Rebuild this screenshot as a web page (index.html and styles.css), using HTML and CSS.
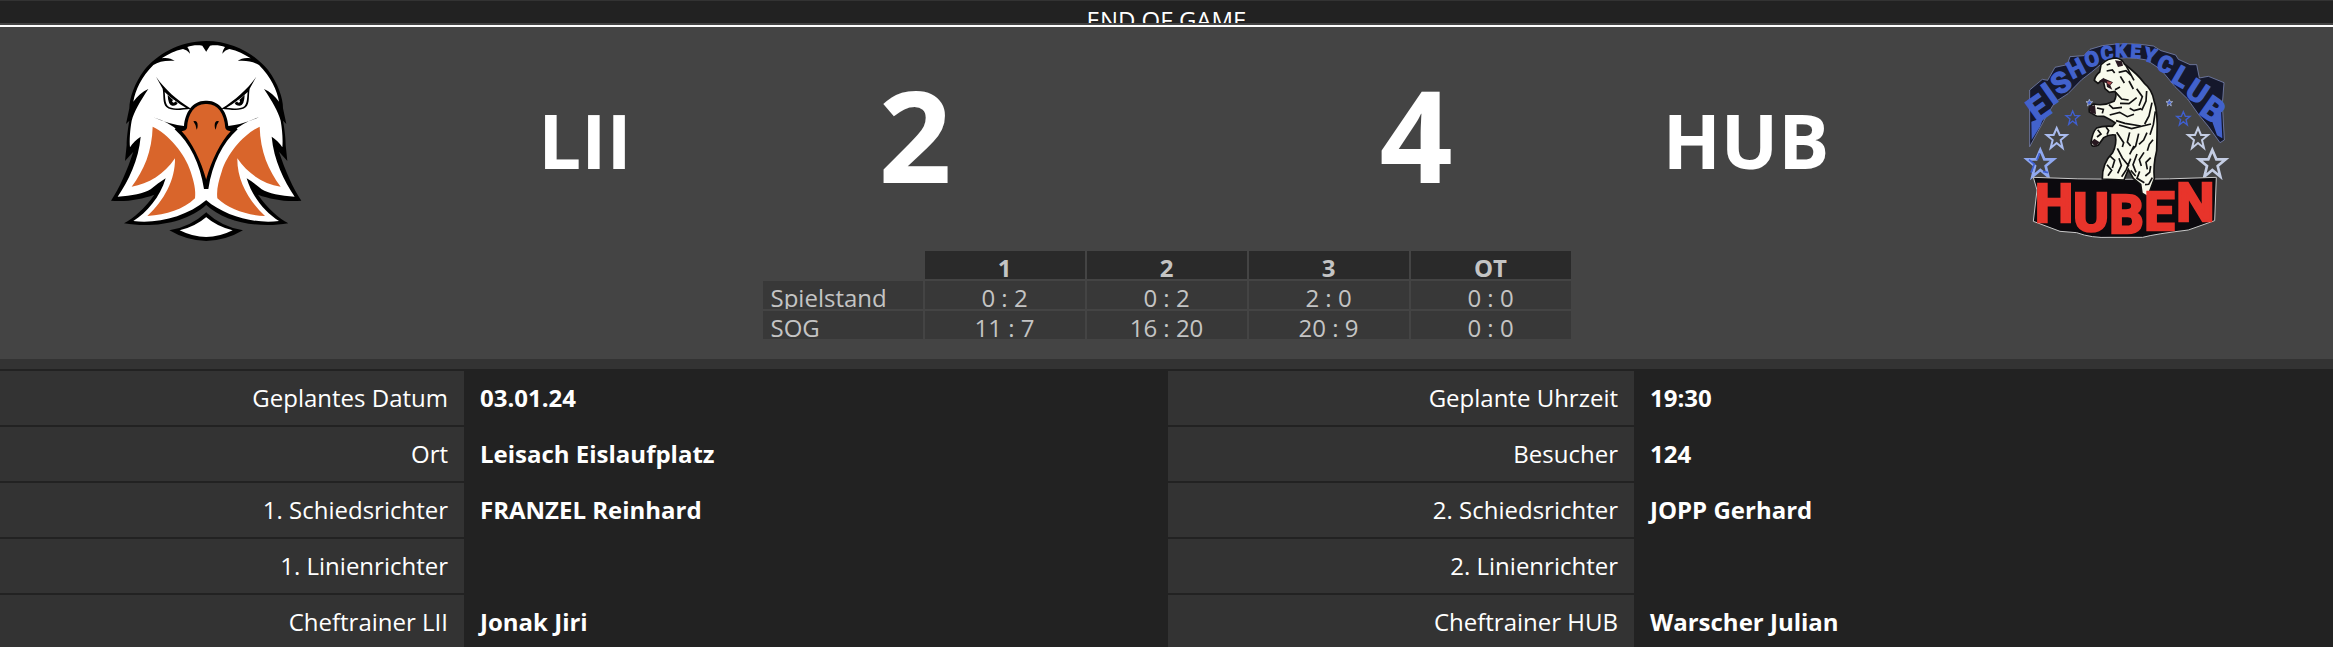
FILE: index.html
```
<!DOCTYPE html>
<html lang="de">
<head>
    <meta charset="UTF-8">
    <meta name="viewport" content="width=device-width, initial-scale=1.0">
    <title>LII - HUB</title>
    <link rel="stylesheet" href="styles.css">
</head>
<body>
    <header class="status-bar">END OF GAME</header>

    <section class="scoreboard">
        <div class="teams">
            <svg class="logo" viewBox="18 33 600 600" role="img" aria-label="LII">
                <defs>
                    <g id="eagle-half">
                        <path d="M319 33C235 33 170 75 133 120C103 160 88 205 88 235L78 282L88 272C82 305 80 330 80 345L75 393L100 365C82 420 58 475 33 512C80 516 125 508 163 494C135 535 100 565 72 580C165 596 265 575 319 524Z"/>
                        <path fill="#fff" d="M319 66L307 47C292 44 275 46 262 51C266 57 269 63 270 71C264 63 257 59 249 57C225 62 203 73 185 85C202 82 214 86 224 93C195 91 175 96 160 105C125 140 105 182 100 215C112 199 127 185 145 177C120 215 103 243 95 272C90 300 88 330 90 352C98 339 109 329 122 320C116 390 85 452 53 500C95 498 132 490 152 478C166 466 181 455 197 445C180 502 140 548 100 573C172 582 260 560 319 510Z"/>
                        <path fill="#d9652b" d="M158 290C205 312 255 370 272 425C282 455 288 480 285 505C250 538 200 555 142 558C192 512 226 450 225 385C193 433 145 462 95 470C132 420 156 365 158 290Z"/>
                        <path d="M168 140C195 178 230 209 273 236C245 239 215 245 199 231C187 219 192 198 188 176Z"/>
                        <path fill="#fff" d="M194 186C216 207 238 222 258 233C235 235 214 238 204 229C195 220 196 203 194 186Z"/>
                        <path d="M203 195Q218 211 233 219Q229 228 217 227Q204 225 203 195Z"/>
                        <circle cx="221" cy="214" r="4" fill="#fff"/>
                        <path d="M160 262Q213 285 252 288L262 304L240 306Q206 276 160 262Z"/>
                        <path fill="#d9652b" d="M319 217C280 216 260 250 256 294Q248 300 230 299C275 343 302 397 315 458L319 460Z"/>
                        <path d="M319 212C278 210 255 248 252 288Q245 294 228 294L224 298C270 340 300 400 312 477H319V450C302 390 275 335 245 304Q258 302 261 294C264 248 285 220 319 222Z"/>
                        <path d="M280 274Q293 270 293 287Q293 293 290 299Q288 284 280 274Z"/>
                        <path d="M319 547Q270 592 208 601Q260 632 319 633Z"/>
                        <path fill="#fff" d="M319 561Q287 589 239 601Q278 621 319 621Z"/>
                    </g>
                </defs>
                <use href="#eagle-half"/>
                <use href="#eagle-half" transform="translate(637 0) scale(-1 1)"/>
            </svg>
            <h2 class="team-name">LII</h2>
            <strong class="score">2</strong>
            <strong class="score away">4</strong>
            <h2 class="team-name">HUB</h2>
            <svg class="logo" viewBox="33 33 600 600" role="img" aria-label="HUB">
                <defs>
                    <path id="star" d="M0-10L3-3L10-3L4 2L6 10L0 5L-6 10L-4 2L-10-3L-3-3Z"/>
                </defs>

                <!-- arch behind the club name -->
                <path class="arch" d="M44 180L82 148L98 151L120 112L157 104L165 80L207 77L225 58L262 47Q335 35 415 48L438 62L482 75L490 88L525 104L545 104L553 144L580 139L627 158L622 222L628 330L615 338L580 289L551 254L518 207L480 170L438 119L395 90Q335 76 272 91L230 126L200 149L159 191L120 216L96 255L44 350Z"/>
                <path fill="#4262cc" d="M49 275L86 262L75 290L50 330ZM590 270L618 240L622 325L606 316Z"/>
                <text class="arch-text">
                    <tspan x="67" y="280" rotate="-35" font-size="100">E</tspan>
                    <tspan x="112" y="227" rotate="-35" font-size="98">I</tspan>
                    <tspan x="131" y="197" rotate="-32" font-size="86">S</tspan>
                    <tspan x="172" y="148" rotate="-27" font-size="70">H</tspan>
                    <tspan x="217" y="114" rotate="-18" font-size="62">O</tspan>
                    <tspan x="260" y="91" rotate="-8" font-size="56">C</tspan>
                    <tspan x="301" y="81" rotate="0" font-size="54">K</tspan>
                    <tspan x="346" y="82" rotate="4" font-size="54">E</tspan>
                    <tspan x="383" y="91" rotate="14" font-size="58">Y</tspan>
                    <tspan x="421" y="115" rotate="25" font-size="68">C</tspan>
                    <tspan x="466" y="154" rotate="30" font-size="82">L</tspan>
                    <tspan x="506" y="194" rotate="33" font-size="88">U</tspan>
                    <tspan x="549" y="249" rotate="35" font-size="98">B</tspan>
                </text>

                <g class="stars">
                    <use href="#star" transform="translate(223 218)" fill="#3f5fd0"/>
                    <use href="#star" transform="translate(463 218)" fill="#3f5fd0"/>
                    <use href="#star" transform="translate(173 263) scale(2)" stroke="#3f5fd0"/>
                    <use href="#star" transform="translate(505 265) scale(2)" stroke="#3f5fd0"/>
                    <use href="#star" transform="translate(125 324) scale(3)" stroke="#a9bbee"/>
                    <use href="#star" transform="translate(549 324) scale(3)" stroke="#c4cde3"/>
                    <use href="#star" transform="translate(76 400) scale(4)" stroke="#8fa8f0"/>
                    <use href="#star" transform="translate(592 400) scale(4)" stroke="#c4cde3"/>
                    <path fill="none" stroke="#3f5fd0" stroke-width="5" d="M48 428L58 402L42 389M66 390L74 369M84 424L99 428"/>
                </g>

                <!-- banner -->
                <path fill="#0c0a0e" stroke="#c9c9c9" stroke-width="3" d="M55 442Q320 454 604 442L599 572L520 600Q420 612 383 622H285Q230 625 185 608L135 604L55 574L66 480Z"/>

                <!-- bear -->
                <path fill="#f8faec" stroke="#111" stroke-width="5" d="M264 148L249 160L238 151Q240 137 254 126L258 104Q278 84 304 84Q323 88 328 102Q370 134 388 160Q411 178 417 212Q429 245 426 315L425 362Q414 405 418 446L398 500L381 490L377 463L355 445L340 418L327 450L262 447Q261 400 293 368Q306 344 301 315Q283 312 266 323L250 345Q230 355 228 339Q232 306 245 294Q264 287 292 289L301 279Q280 265 266 259L244 258L223 246Q219 229 236 222Q267 229 297 214Q307 195 300 184L283 187L270 176Z"/>
                <path fill="#271820" d="M251 154L266 145L294 157L286 166L292 179L276 171L274 159ZM300 91L321 94L324 107L309 111L304 100ZM222 230L240 225L243 252L227 250ZM228 337L238 326L254 337L241 350Z"/>
                <path fill="#a64a4c" d="M275 154L291 157L285 165L278 161Z"/>
                <path class="fur" d="M275 123L292 120L299 129M275 105L286 101M311 127L333 122L350 138M333 107L357 151M316 139L328 159M342 153L355 177M300 179L315 171M302 187L320 207L341 210M315 220L342 221L365 203M365 176L382 200L372 227M395 183L393 213L380 241M411 218L402 258L389 282M421 244L415 284L405 314M246 234L265 238L262 250M282 224L294 235L321 232M284 255L314 247L337 260L357 253M303 272L330 280L377 288M312 285L350 296L408 282M344 235L357 242L379 236M248 299L258 312L246 321M273 291L281 302L276 314M305 307L326 338L322 351M344 307L337 336L347 348M371 311L362 348L352 359M396 308L386 330L372 343M414 329L403 343L397 362M307 355L322 384L342 409M344 373L357 348M285 378L299 391L292 414M276 404L290 421L279 437M312 385L319 406L308 430M347 386L334 419L320 440M366 372L354 404L363 427M387 367L373 389L379 408M407 383L393 397L397 418M407 408L404 427L391 438M347 421L362 438M374 424L366 445L388 458M412 443L401 463L390 464"/>

                <text class="banner-text" font-size="162">
                    <tspan x="60" y="576">H</tspan>
                    <tspan x="175" y="602">U</tspan>
                    <tspan x="283" y="610">B</tspan>
                    <tspan x="388" y="600">E</tspan>
                    <tspan x="484" y="574">N</tspan>
                </text>
            </svg>
        </div>

        <table class="periods">
            <thead>
                <tr>
                    <td></td>
                    <th scope="col"><div>1</div></th>
                    <th scope="col"><div>2</div></th>
                    <th scope="col"><div>3</div></th>
                    <th scope="col"><div>OT</div></th>
                </tr>
            </thead>
            <tbody>
                <tr>
                    <th scope="row"><div>Spielstand</div></th>
                    <td><div>0 : 2</div></td>
                    <td><div>0 : 2</div></td>
                    <td><div>2 : 0</div></td>
                    <td><div>0 : 0</div></td>
                </tr>
                <tr>
                    <th scope="row"><div>SOG</div></th>
                    <td><div>11 : 7</div></td>
                    <td><div>16 : 20</div></td>
                    <td><div>20 : 9</div></td>
                    <td><div>0 : 0</div></td>
                </tr>
            </tbody>
        </table>
    </section>

    <dl class="details">
        <dt>Geplantes Datum</dt>
        <dd>03.01.24</dd>
        <dt>Geplante Uhrzeit</dt>
        <dd>19:30</dd>
        <dt>Ort</dt>
        <dd>Leisach Eislaufplatz</dd>
        <dt>Besucher</dt>
        <dd>124</dd>
        <dt>1. Schiedsrichter</dt>
        <dd>FRANZEL Reinhard</dd>
        <dt>2. Schiedsrichter</dt>
        <dd>JOPP Gerhard</dd>
        <dt>1. Linienrichter</dt>
        <dd></dd>
        <dt>2. Linienrichter</dt>
        <dd></dd>
        <dt>Cheftrainer LII</dt>
        <dd>Jonak Jiri</dd>
        <dt>Cheftrainer HUB</dt>
        <dd>Warscher Julian</dd>
    </dl>
</body>
</html>
```

FILE: styles.css
```
:root {
    --bg: #222222;
    --panel: #444444;
    --label: #333333;
    --text: #ffffff;
    --muted: #c4c4c4;
}

* {
    box-sizing: border-box;
}

body {
    margin: 0;
    background-color: var(--bg);
    color: var(--text);
    font-family: 'Open Sans', 'Noto Sans', sans-serif;
    font-size: 24px;
    overflow: hidden;
}

.status-bar {
    height: 23px;
    border-top: 1px solid var(--label);
    line-height: 38px;
    text-align: center;
    overflow: hidden;
}

.scoreboard {
    background-color: var(--panel);
    border-bottom: 10px solid var(--label);
    padding: 2px 0 18px;
}

.teams {
    display: grid;
    grid-template-columns: 412fr 346fr 314fr 187fr 314fr 346fr 414fr;
    align-items: center;
    justify-items: center;
    border-top: 2px solid var(--text);
    padding: 14px 0 8px;
}

.logo {
    width: 200px;
    height: 200px;
    overflow: visible;
}

.team-name {
    margin: 0;
    padding-bottom: 2px;
    font-size: 76px;
    line-height: 100px;
}

.score {
    padding-bottom: 14px;
    font-size: 128px;
    line-height: 180px;
}

.away {
    grid-column: 5;
}

.arch {
    fill: #15182c;
    stroke: #8794c8;
    stroke-width: 2;
}

.arch-text {
    font-family: Roboto, sans-serif;
    font-weight: bold;
    fill: #4262cc;
    stroke: #4262cc;
    stroke-width: 4;
}

.stars {
    fill: none;
    stroke: #c4cde3;
    stroke-width: 2;
}

.fur {
    fill: none;
    stroke: #111111;
    stroke-width: 5;
}

.banner-text {
    font-family: Roboto, sans-serif;
    font-weight: bold;
    fill: #e8342b;
    stroke: #e8342b;
    stroke-width: 8;
}

.periods {
    width: 812px;
    max-width: 100%;
    margin: 0 auto;
    border-spacing: 2px;
    table-layout: fixed;
    color: var(--muted);
}

.periods th,
.periods td {
    padding: 0;
    text-align: center;
}

.periods div {
    height: 28px;
    padding: 0 8px;
    background-color: #383838;
    overflow: hidden;
}

.periods thead div {
    background-color: #2a2a2a;
}

.periods tbody th {
    font-weight: normal;
    text-align: left;
}

.details {
    display: grid;
    grid-template-columns: 464fr 700fr 466fr 697fr;
    gap: 2px;
    margin: 2px 0 0;
    line-height: 54px;
}

.details dt {
    background-color: var(--label);
    padding: 0 16px;
    text-align: right;
}

.details dd {
    min-height: 54px;
    margin: 0;
    padding: 0 14px;
    font-weight: bold;
}
```
